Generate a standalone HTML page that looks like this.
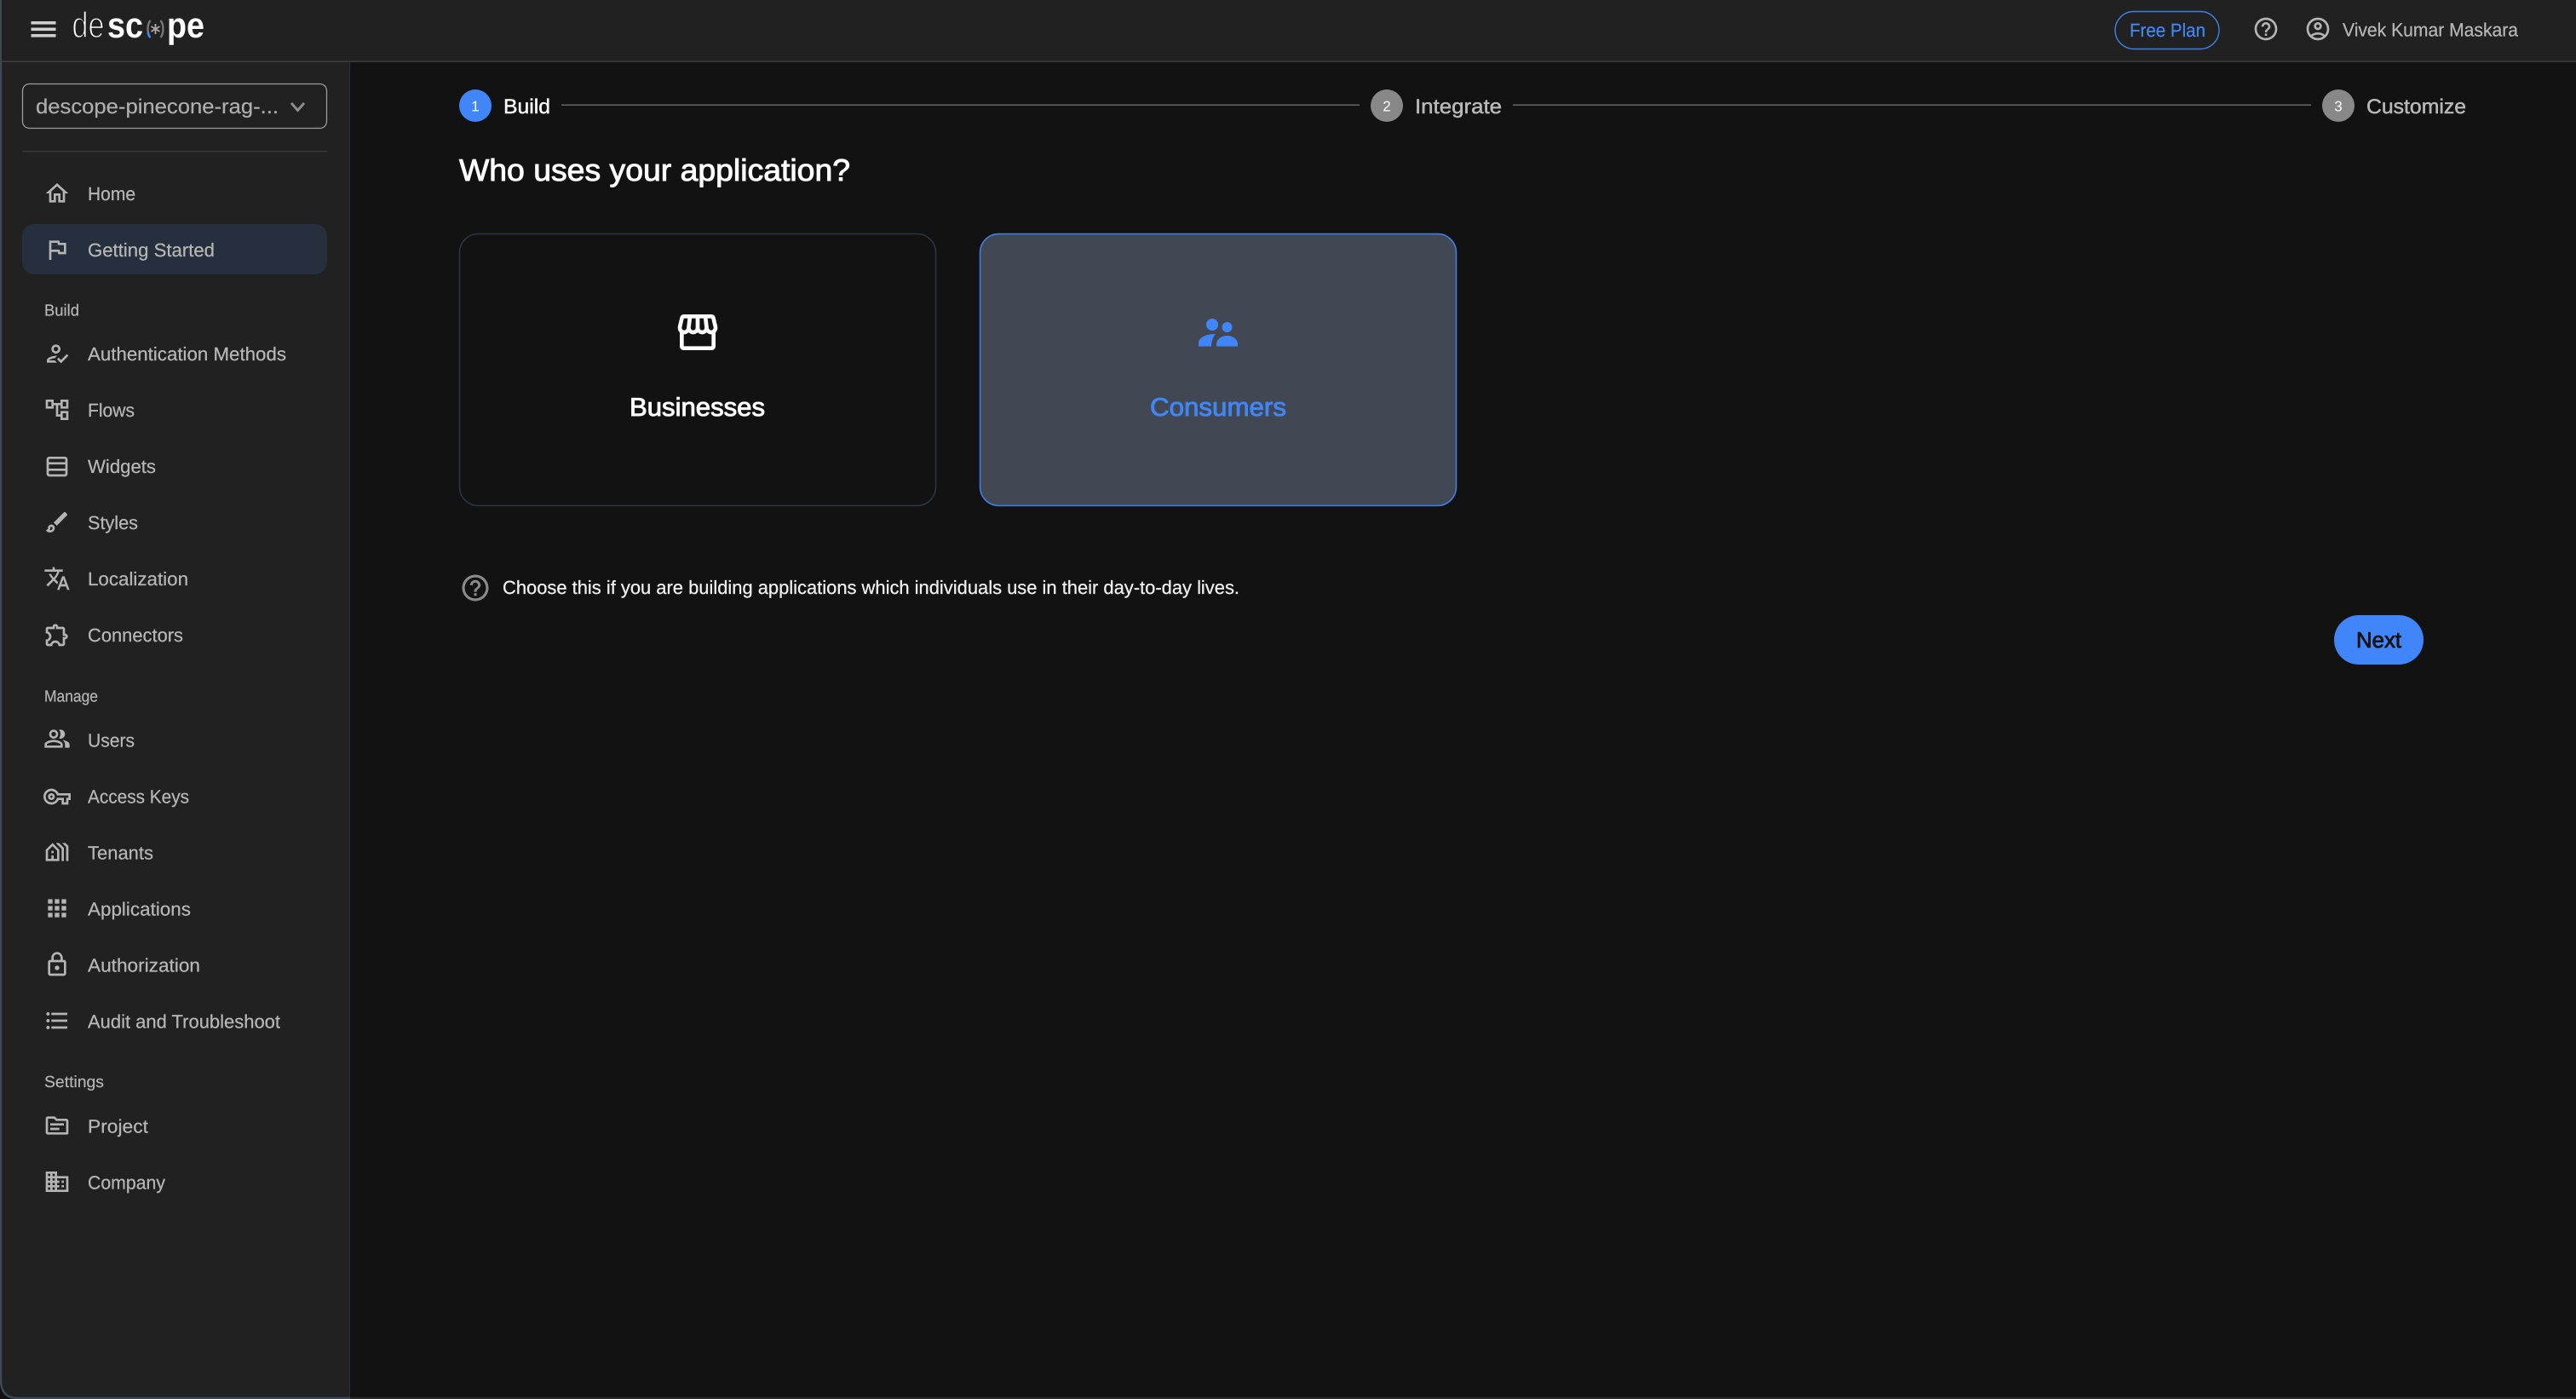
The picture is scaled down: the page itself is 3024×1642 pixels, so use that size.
<!DOCTYPE html>
<html lang="en">
<head>
<meta charset="utf-8">
<title>Descope - Getting Started</title>
<style>
html,body{margin:0;padding:0;background:#121212;width:3024px;height:1642px;overflow:hidden}
svg{display:block}
text{font-family:"Liberation Sans",sans-serif;text-rendering:geometricPrecision}
.n{font-size:22px;fill:#b6b6b6;stroke:#b6b6b6;stroke-width:.25px}
.l{font-size:19px;fill:#b6b6b6;stroke:#b6b6b6;stroke-width:.2px}
.s{font-size:24px}
.num{font-size:17px;fill:#fff;text-anchor:middle}
.i{fill:#b4b4b4}
</style>
</head>
<body>
<svg xmlns="http://www.w3.org/2000/svg" width="3024" height="1642" viewBox="0 0 3024 1642">
<rect width="3024" height="1642" fill="#121212"/>
<rect x="411" y="1640" width="2613" height="2" fill="#2a2a2a"/>
<!-- sidebar -->
<path d="M0 72H411V1642H20Q1 1642 1 1620Z" fill="#212121"/>
<path d="M1 0V1620Q1 1641 21 1641H411" fill="none" stroke="#3f4854" stroke-width="2.4"/>
<rect x="410" y="72" width="1.200" height="1568" fill="#272d37"/>
<!-- header -->
<rect x="2" width="3022" height="72" fill="#212121"/>
<rect x="2" y="71.5" width="3022" height="1.5" fill="#3d3d3d"/>
<!-- hamburger -->
<g fill="#cfcfcf"><rect x="36.500" y="25" width="29" height="3.600"/><rect x="36.500" y="32.500" width="29" height="3.600"/><rect x="36.500" y="40" width="29" height="3.600"/></g>
<!-- logo -->
<text x="84.500" y="44" font-size="43" fill="#fff" stroke="#212121" stroke-width="1.500" textLength="38" lengthAdjust="spacingAndGlyphs">de</text>
<text x="126" y="44" font-size="42" font-weight="700" fill="#fff" textLength="42" lengthAdjust="spacingAndGlyphs">sc</text>
<text x="196" y="44" font-size="42" font-weight="700" fill="#fff" textLength="44" lengthAdjust="spacingAndGlyphs">pe</text>
<path d="M176.500 24C172.500 29 172.500 39 176.500 44" fill="none" stroke="#777" stroke-width="2.400"/>
<path d="M173.800 38C174 40.500 175 42.500 176.500 44" fill="none" stroke="#3f83f0" stroke-width="2.600"/>
<path d="M188.500 24C192.500 29 192.500 39 188.500 44" fill="none" stroke="#777" stroke-width="2.400"/>
<path d="M182.500 28V40M177.500 31L187.500 37M187.500 31L177.500 37" fill="none" stroke="#aaa" stroke-width="1.800"/>
<!-- select -->
<rect x="26.500" y="98.500" width="357" height="52" rx="8" fill="none" stroke="#9c9c9c" stroke-width="1.300"/>
<text x="42" y="133" font-size="24" fill="#adadad" stroke="#adadad" stroke-width=".25" textLength="285" lengthAdjust="spacingAndGlyphs">descope-pinecone-rag-...</text>
<path d="M342 121L349.500 129.500L357 121" fill="none" stroke="#8c8c8c" stroke-width="3"/>
<rect x="26" y="177" width="358" height="1.400" fill="#3a3a3a"/>
<!-- active -->
<rect x="26" y="263" width="358" height="59" rx="14" fill="#262f3d"/>
<!-- nav text -->
<text class="n" x="103" y="235" textLength="56" lengthAdjust="spacingAndGlyphs">Home</text>
<text class="n" x="103" y="301" textLength="149" lengthAdjust="spacingAndGlyphs">Getting Started</text>
<text class="l" x="52" y="370.500" textLength="41" lengthAdjust="spacingAndGlyphs">Build</text>
<text class="n" x="103" y="423" textLength="233" lengthAdjust="spacingAndGlyphs">Authentication Methods</text>
<text class="n" x="103" y="489" textLength="55" lengthAdjust="spacingAndGlyphs">Flows</text>
<text class="n" x="103" y="555" textLength="80" lengthAdjust="spacingAndGlyphs">Widgets</text>
<text class="n" x="103" y="621" textLength="59" lengthAdjust="spacingAndGlyphs">Styles</text>
<text class="n" x="103" y="687" textLength="118" lengthAdjust="spacingAndGlyphs">Localization</text>
<text class="n" x="103" y="753" textLength="112" lengthAdjust="spacingAndGlyphs">Connectors</text>
<text class="l" x="52" y="823.500" textLength="63" lengthAdjust="spacingAndGlyphs">Manage</text>
<text class="n" x="103" y="876.500" textLength="55" lengthAdjust="spacingAndGlyphs">Users</text>
<text class="n" x="103" y="942.500" textLength="119" lengthAdjust="spacingAndGlyphs">Access Keys</text>
<text class="n" x="103" y="1008.500" textLength="77" lengthAdjust="spacingAndGlyphs">Tenants</text>
<text class="n" x="103" y="1074.500" textLength="121" lengthAdjust="spacingAndGlyphs">Applications</text>
<text class="n" x="103" y="1140.500" textLength="132" lengthAdjust="spacingAndGlyphs">Authorization</text>
<text class="n" x="103" y="1206.500" textLength="226" lengthAdjust="spacingAndGlyphs">Audit and Troubleshoot</text>
<text class="l" x="52" y="1276" textLength="70" lengthAdjust="spacingAndGlyphs">Settings</text>
<text class="n" x="103" y="1329.500" textLength="71" lengthAdjust="spacingAndGlyphs">Project</text>
<text class="n" x="103" y="1395.500" textLength="91" lengthAdjust="spacingAndGlyphs">Company</text>
<!-- nav icons -->
<g class="i">
<path transform="translate(51 211) scale(1.333)" d="m12 5.69 5 4.5V18h-2v-6H9v6H7v-7.81l5-4.500M12 3 2 12h3v8h6v-6h2v6h6v-8h3L12 3z"/>
<path transform="translate(51 277) scale(1.333)" d="m12.360 6 .4 2H18v6h-3.360l-.4-2H7V6h5.360M14 4H5v17h2v-7h5.600l.4 2h7V6h-5.600L14 4z"/>
<path transform="translate(51 399) scale(1.333)" d="M11 12c2.210 0 4-1.790 4-4s-1.790-4-4-4-4 1.790-4 4 1.790 4 4 4zm0-6c1.100 0 2 .9 2 2s-.9 2-2 2-2-.9-2-2 .9-2 2-2zM5 18c.2-.63 2.570-1.680 4.960-1.940l2.040-2c-.39-.04-.68-.06-1-.06-2.670 0-8 1.340-8 4v2h9l-2-2H5zm15.600-5.500-5.130 5.170-2.070-2.080L12 17l3.470 3.500L22 13.910z"/>
<path transform="translate(51 465) scale(1.333)" d="M22 11V3h-7v3H9V3H2v8h7V8h2v10h4v3h7v-8h-7v3h-2V8h2v3h7zM7 9H4V5h3v4zm10 6h3v4h-3v-4zm0-10h3v4h-3V5z"/>
<path d="M58 537.300H76a2 2 0 0 1 2 2V556a2 2 0 0 1-2 2H58a2 2 0 0 1-2-2V539.300a2 2 0 0 1 2-2ZM56 543.800H78M56 551.300H78" fill="none" stroke="#b4b4b4" stroke-width="2.700"/>
<path transform="translate(51 597) scale(1.333)" d="M7 16c.55 0 1 .45 1 1 0 1.100-.9 2-2 2-.17 0-.33-.02-.5-.05.31-.55.5-1.210.5-1.950 0-.55.45-1 1-1M18.670 3c-.26 0-.51.1-.71.29L9 12.250 11.750 15l8.960-8.960c.39-.39.39-1.020 0-1.410l-1.340-1.340c-.2-.2-.45-.29-.7-.29zM7 14c-1.660 0-3 1.340-3 3 0 1.310-1.160 2-2 2 .92 1.220 2.490 2 4 2 2.210 0 4-1.790 4-4 0-1.660-1.340-3-3-3z"/>
<path transform="translate(51 663) scale(1.333)" d="m12.870 15.070-2.540-2.510.03-.03c1.740-1.940 2.980-4.170 3.710-6.530H17V4h-7V2H8v2H1v1.990h11.170C11.500 7.920 10.440 9.750 9 11.350 8.070 10.320 7.300 9.190 6.690 8h-2c.73 1.630 1.730 3.170 2.980 4.560l-5.090 5.020L4 19l5-5 3.110 3.110.76-2.040zM18.500 10h-2L12 22h2l1.120-3h4.750L21 22h2l-4.500-12zm-2.620 7 1.620-4.330L19.120 17h-3.240z"/>
<path transform="translate(51 729) scale(1.333)" d="M10.500 4.500c.28 0 .5.22.5.5v2h6v6h2c.28 0 .5.22.5.5s-.22.5-.5.5h-2v6h-2.120c-.68-1.750-2.390-3-4.380-3s-3.700 1.250-4.380 3H4v-2.120c1.750-.68 3-2.390 3-4.380 0-1.990-1.240-3.700-2.990-4.380L4 7h6V5c0-.28.22-.5.5-.5m0-2C9.120 2.500 8 3.620 8 5H4c-1.100 0-1.990.9-1.990 2v3.800h.29c1.490 0 2.700 1.210 2.700 2.700s-1.210 2.700-2.700 2.700H2V20c0 1.100.9 2 2 2h3.800v-.3c0-1.490 1.210-2.700 2.700-2.700s2.700 1.210 2.700 2.700v.3H17c1.100 0 2-.9 2-2v-4c1.380 0 2.500-1.120 2.500-2.500S20.380 11 19 11V7c0-1.100-.9-2-2-2h-4c0-1.380-1.120-2.500-2.500-2.500z"/>
<path transform="translate(51 851) scale(1.333)" d="M16.670 13.130C18.040 14.060 19 15.320 19 17v3h4v-3c0-2.180-3.570-3.470-6.330-3.870zM15 12c2.210 0 4-1.790 4-4s-1.790-4-4-4c-.47 0-.91.1-1.330.24C14.500 5.270 15 6.580 15 8s-.5 2.730-1.330 3.760c.42.14.86.24 1.330.24zM9 12c2.210 0 4-1.790 4-4s-1.790-4-4-4-4 1.790-4 4 1.790 4 4 4zm0-6c1.100 0 2 .9 2 2s-.9 2-2 2-2-.9-2-2 .9-2 2-2zM9 13c-2.670 0-8 1.340-8 4v3h16v-3c0-2.660-5.330-4-8-4zm6 5H3v-.99C3.200 16.290 6.300 15 9 15s5.800 1.290 6 2v1z"/>
<path transform="translate(51 919) scale(1.333)" d="M22 19h-6v-4h-2.680c-1.140 2.420-3.600 4-6.320 4-3.860 0-7-3.140-7-7s3.140-7 7-7c2.720 0 5.170 1.580 6.320 4H24v6h-2v4zm-4-2h2v-4h2v-2H11.940l-.23-.67C11.010 8.340 9.110 7 7 7c-2.760 0-5 2.240-5 5s2.240 5 5 5c2.110 0 4.010-1.340 4.710-3.330l.23-.67H18v4zM7 15c-1.650 0-3-1.350-3-3s1.350-3 3-3 3 1.350 3 3-1.350 3-3 3zm0-4c-.55 0-1 .45-1 1s.45 1 1 1 1-.45 1-1-.45-1-1-1z"/>
<path transform="translate(51 984) scale(1.333)" d="M8 4l-6 6v10h12V10L8 4zM12 18H9v-3H7v3H4v-7.170l4-4 4 4V18zM9 13H7v-2h2V13zM18 20V8.350L13.650 4h-2.830L16 9.180V20H18zM22 20V6.690L19.310 4h-2.830L20 7.520V20H22z"/>
<path transform="translate(51 1050) scale(1.333)" d="M4 8h4V4H4v4zm6 12h4v-4h-4v4zm-6 0h4v-4H4v4zm0-6h4v-4H4v4zm6 0h4v-4h-4v4zm6-10v4h4V4h-4zm-6 4h4V4h-4v4zm6 6h4v-4h-4v4zm0 6h4v-4h-4v4z"/>
<path transform="translate(51 1116) scale(1.333)" d="M18 8h-1V6c0-2.760-2.240-5-5-5S7 3.240 7 6v2H6c-1.100 0-2 .9-2 2v10c0 1.100.9 2 2 2h12c1.100 0 2-.9 2-2V10c0-1.100-.9-2-2-2zM9 6c0-1.660 1.340-3 3-3s3 1.340 3 3v2H9V6zm9 14H6V10h12v10zm-6-3c1.100 0 2-.9 2-2s-.9-2-2-2-2 .9-2 2 .9 2 2 2z"/>
<path transform="translate(51 1182) scale(1.333)" d="M4 10.500c-.83 0-1.500.67-1.500 1.500s.67 1.500 1.500 1.500 1.500-.67 1.500-1.500-.67-1.500-1.500-1.500zm0-6c-.83 0-1.500.67-1.500 1.500S3.170 7.500 4 7.500 5.500 6.830 5.500 6 4.830 4.500 4 4.500zm0 12c-.83 0-1.500.68-1.500 1.500s.68 1.500 1.500 1.500 1.500-.68 1.500-1.500-.67-1.500-1.500-1.500zM7 19h14v-2H7v2zm0-6h14v-2H7v2zm0-8v2h14V5H7z"/>
<path transform="translate(51 1305) scale(1.333)" d="M20 6h-8l-2-2H4c-1.100 0-1.990.9-1.990 2L2 18c0 1.100.9 2 2 2h16.770c.68 0 1.230-.56 1.230-1.230V8c0-1.100-.9-2-2-2zm0 12H4V6h5.170l1.410 1.410.59.59H20v10zm-2-6H6v-2h12v2zm-4 4H6v-2h8v2z"/>
<path transform="translate(51 1371) scale(1.333)" d="M12 7V3H2v18h20V7H12zM6 19H4v-2h2v2zm0-4H4v-2h2v2zm0-4H4V9h2v2zm0-4H4V5h2v2zm4 12H8v-2h2v2zm0-4H8v-2h2v2zm0-4H8V9h2v2zm0-4H8V5h2v2zm10 12h-8v-2h2v-2h-2v-2h2v-2h-2V9h8v10zm-2-8h-2v2h2v-2zm0 4h-2v2h2v-2z"/>
</g>
<!-- top right -->
<rect x="2483" y="13.500" width="122" height="44" rx="22" fill="none" stroke="#3f7fe0" stroke-width="1.400"/>
<text x="2500" y="43" font-size="22" fill="#4186f3" stroke="#4186f3" stroke-width=".25" textLength="89" lengthAdjust="spacingAndGlyphs">Free Plan</text>
<path class="i" transform="translate(2644 18) scale(1.333)" d="M11 18h2v-2h-2v2zm1-16C6.480 2 2 6.480 2 12s4.480 10 10 10 10-4.480 10-10S17.520 2 12 2zm0 18c-4.410 0-8-3.590-8-8s3.590-8 8-8 8 3.590 8 8-3.590 8-8 8zm0-14c-2.210 0-4 1.790-4 4h2c0-1.100.9-2 2-2s2 .9 2 2c0 2-3 1.750-3 5h2c0-2.250 3-2.500 3-5 0-2.210-1.790-4-4-4z"/>
<path class="i" transform="translate(2705 18) scale(1.333)" d="M12 2C6.480 2 2 6.480 2 12s4.480 10 10 10 10-4.480 10-10S17.520 2 12 2zM7.350 18.500C8.660 17.560 10.260 17 12 17s3.340.56 4.650 1.500c-1.310.94-2.910 1.500-4.650 1.500s-3.340-.56-4.650-1.500zm10.790-1.380C16.450 15.800 14.320 15 12 15s-4.450.8-6.140 2.120C4.700 15.730 4 13.950 4 12c0-4.420 3.580-8 8-8s8 3.580 8 8c0 1.950-.7 3.730-1.860 5.120zM12 6c-1.930 0-3.500 1.570-3.500 3.500S10.070 13 12 13s3.500-1.570 3.500-3.500S13.930 6 12 6zm0 5c-.83 0-1.500-.67-1.500-1.500S11.170 8 12 8s1.500.67 1.500 1.500S12.830 11 12 11z"/>
<text x="2750" y="42.500" font-size="22" fill="#b6b6b6" stroke="#b6b6b6" stroke-width=".25" textLength="206" lengthAdjust="spacingAndGlyphs">Vivek Kumar Maskara</text>
<!-- stepper -->
<rect x="659" y="122.500" width="937" height="1.500" fill="#666"/>
<rect x="1776" y="122.500" width="937" height="1.500" fill="#666"/>
<circle cx="558" cy="124" r="19" fill="#4186f8"/>
<text class="num" x="558" y="130.500">1</text>
<text class="s" x="591" y="133" fill="#fff" stroke="#fff" stroke-width=".4" textLength="55" lengthAdjust="spacingAndGlyphs">Build</text>
<circle cx="1628" cy="124" r="19" fill="#888"/>
<text class="num" x="1628" y="130.500">2</text>
<text class="s" x="1661" y="133" fill="#b8b8b8" stroke="#b8b8b8" stroke-width=".5" textLength="102" lengthAdjust="spacingAndGlyphs">Integrate</text>
<circle cx="2745" cy="124" r="19" fill="#888"/>
<text class="num" x="2745" y="130.500">3</text>
<text class="s" x="2778" y="133" fill="#b8b8b8" stroke="#b8b8b8" stroke-width=".5" textLength="117" lengthAdjust="spacingAndGlyphs">Customize</text>
<!-- heading -->
<text x="539" y="212" font-size="36" fill="#fff" stroke="#fff" stroke-width=".9" textLength="459" lengthAdjust="spacingAndGlyphs">Who uses your application?</text>
<!-- cards -->
<rect x="539.500" y="274.500" width="559" height="319" rx="22" fill="#121212" stroke="#2e3440" stroke-width="1.500"/>
<rect x="1150.500" y="274.500" width="559" height="319" rx="22" fill="#414853" stroke="#3f80e8" stroke-width="1.500"/>
<path fill="#fff" transform="translate(791 362) scale(2.333)" d="M21.900 8.890l-1.050-4.370c-.22-.9-1-1.520-1.910-1.520H5.050c-.9 0-1.690.63-1.900 1.520L2.100 8.890c-.24 1.020-.02 2.060.62 2.880.08.11.19.19.28.29V19c0 1.100.9 2 2 2h14c1.100 0 2-.9 2-2v-6.940c.09-.09.2-.18.28-.28.64-.82.87-1.870.62-2.890zm-2.990-3.900 1.050 4.370c.1.42.01.84-.25 1.170-.14.18-.44.47-.94.47-.61 0-1.140-.49-1.210-1.140L16.980 5l1.930-.01zM13 5h1.960l.54 4.520c.05.39-.07.78-.33 1.070-.22.26-.54.41-.95.41-.67 0-1.220-.59-1.220-1.310V5zM8.490 9.520 9.040 5H11v4.690c0 .72-.55 1.310-1.290 1.310-.34 0-.65-.15-.89-.41-.25-.29-.37-.68-.33-1.070zm-4.450-.16L5.050 5h1.970l-.58 4.860c-.08.65-.6 1.140-1.210 1.140-.49 0-.8-.29-.93-.47-.27-.32-.36-.75-.26-1.170zM5 19v-6.030c.08.01.15.03.23.03.87 0 1.660-.36 2.240-.95.6.6 1.400.95 2.310.95.87 0 1.650-.36 2.230-.93.59.57 1.390.93 2.290.93.84 0 1.640-.35 2.240-.95.58.59 1.370.95 2.240.95.08 0 .15-.02.23-.03V19H5z"/>
<g fill="#4186f8">
<circle cx="1423" cy="381" r="7"/>
<circle cx="1440.500" cy="384" r="6"/>
<path d="M1407 406.500V403C1407 396 1416 392 1427 392C1424 395 1422 401 1422 406.500Z"/>
<path d="M1428 406.500V404C1428 398 1434 394 1440.500 394S1453 398 1453 404V406.500Z"/>
</g>
<text x="739" y="488" font-size="30" fill="#fff" stroke="#fff" stroke-width=".9" textLength="159" lengthAdjust="spacingAndGlyphs">Businesses</text>
<text x="1350" y="488" font-size="30" fill="#4186f3" stroke="#4186f3" stroke-width=".9" textLength="160" lengthAdjust="spacingAndGlyphs">Consumers</text>
<!-- help row -->
<path fill="#8a8a8a" transform="translate(539.400 671.400) scale(1.550)" d="M11 18h2v-2h-2v2zm1-16C6.480 2 2 6.480 2 12s4.480 10 10 10 10-4.480 10-10S17.520 2 12 2zm0 18c-4.410 0-8-3.590-8-8s3.590-8 8-8 8 3.590 8 8-3.590 8-8 8zm0-14c-2.210 0-4 1.790-4 4h2c0-1.100.9-2 2-2s2 .9 2 2c0 2-3 1.750-3 5h2c0-2.250 3-2.500 3-5 0-2.210-1.790-4-4-4z"/>
<text x="590" y="697" font-size="22" fill="#f0f0f0" stroke="#f0f0f0" stroke-width=".25" textLength="865" lengthAdjust="spacingAndGlyphs">Choose this if you are building applications which individuals use in their day-to-day lives.</text>
<!-- next -->
<rect x="2740" y="722" width="105" height="58" rx="29" fill="#4186f8"/>
<text x="2766" y="760" font-size="26" fill="#121212" stroke="#121212" stroke-width=".8" textLength="53" lengthAdjust="spacingAndGlyphs">Next</text>
</svg>
</body>
</html>
